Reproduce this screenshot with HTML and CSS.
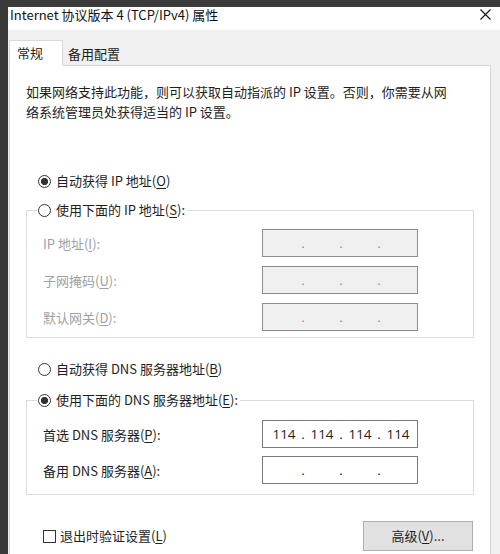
FILE: index.html
```html
<!DOCTYPE html>
<html lang="zh-CN">
<head>
<meta charset="utf-8">
<title>Internet 协议版本 4 (TCP/IPv4) 属性</title>
<link rel="stylesheet" href="styles.css">
</head>
<body>
<div class="screen">
  <div class="window">
    <div class="titlebar">
      <span class="title">Internet 协议版本 4 (TCP/IPv4) 属性</span>
      <svg class="close" width="11" height="11" viewBox="0 0 11 11"><path d="M0.5 0.5 L10.5 10.5 M10.5 0.5 L0.5 10.5" stroke="#111" stroke-width="1.1" fill="none"/></svg>
    </div>
    <div class="body">
      <div class="tabs">
        <div class="tab active">常规</div>
        <div class="tab">备用配置</div>
      </div>
      <div class="panel">
        <p class="desc">如果网络支持此功能，则可以获取自动指派的 IP 设置。否则，你需要从网络系统管理员处获得适当的 IP 设置。</p>

        <div class="option first"><span class="radio on"></span><span>自动获得 IP 地址(<u>O</u>)</span></div>

        <fieldset class="group g-ip">
          <legend class="option"><span class="radio"></span><span>使用下面的 IP 地址(<u>S</u>):</span></legend>
          <div class="row disabled"><span class="lbl">IP 地址(<u>I</u>):</span><span class="ipbox off"><i></i><b>.</b><i></i><b>.</b><i></i><b>.</b><i></i></span></div>
          <div class="row disabled"><span class="lbl">子网掩码(<u>U</u>):</span><span class="ipbox off"><i></i><b>.</b><i></i><b>.</b><i></i><b>.</b><i></i></span></div>
          <div class="row disabled"><span class="lbl">默认网关(<u>D</u>):</span><span class="ipbox off"><i></i><b>.</b><i></i><b>.</b><i></i><b>.</b><i></i></span></div>
        </fieldset>

        <div class="option dns-auto"><span class="radio"></span><span>自动获得 DNS 服务器地址(<u>B</u>)</span></div>

        <fieldset class="group g-dns">
          <legend class="option"><span class="radio on"></span><span>使用下面的 DNS 服务器地址(<u>E</u>):</span></legend>
          <div class="row"><span class="lbl">首选 DNS 服务器(<u>P</u>):</span><span class="ipbox"><i>114</i><b>.</b><i>114</i><b>.</b><i>114</i><b>.</b><i>114</i></span></div>
          <div class="row"><span class="lbl">备用 DNS 服务器(<u>A</u>):</span><span class="ipbox"><i></i><b>.</b><i></i><b>.</b><i></i><b>.</b><i></i></span></div>
        </fieldset>

        <div class="footer">
          <div class="check"><span class="box"></span><span>退出时验证设置(<u>L</u>)</span></div>
          <div class="btn">高级(<u>V</u>)...</div>
        </div>
      </div>
    </div>
  </div>
</div>
</body>
</html>
```

FILE: styles.css
```css
* { box-sizing: border-box; }
html, body { margin: 0; padding: 0; }
body {
  width: 500px;
  height: 554px;
  overflow: hidden;
  font-family: "Noto Sans CJK SC", "Noto Sans", sans-serif;
  font-size: 13px;
  color: #1e1e1e;
  background: #3a3a3a;
}
u { text-decoration: underline; text-underline-offset: 2px; text-decoration-thickness: 1px; }

.screen {
  width: 500px;
  height: 554px;
  padding: 7px 0 0 8px;
  display: flex;
}
.window {
  flex: 1;
  display: flex;
  flex-direction: column;
  background: #f0f0f0;
}
.titlebar {
  height: 23px;
  background: #ffffff;
  display: flex;
  align-items: flex-start;
  justify-content: space-between;
  padding: 0 9px 0 2px;
}
.title { line-height: 16px; color: #111; }
.close { margin-top: 2px; }

.body {
  flex: 1;
  display: flex;
  flex-direction: column;
  padding-left: 1px;
}
.tabs {
  height: 36px;
  padding-top: 10px;
  display: flex;
  align-items: flex-end;
  margin-bottom: -1px;
  position: relative;
  z-index: 1;
}
.tab {
  height: 23px;
  line-height: 22px;
  padding-left: 5px;
  width: 65px;
  color: #1e1e1e;
}
.tab.active {
  height: 26px;
  width: 54px;
  padding-left: 7px;
  line-height: 24px;
  background: #ffffff;
  border: 1px solid #d9d9d9;
  border-bottom: none;
}

.panel {
  width: 482px;
  flex: 1;
  background: #ffffff;
  border: 1px solid #d9d9d9;
  border-bottom: none;
  padding: 16px 16px 0 16px;
  display: flex;
  flex-direction: column;
}
.desc {
  margin: 0;
  line-height: 20px;
  width: 430px;
}

.option {
  display: flex;
  align-items: center;
  gap: 5px;
  line-height: 20px;
  height: 20px;
}
.option.first { margin: 49px 0 0 12px; }
.option.dns-auto { margin: 21px 0 0 12px; }

.radio {
  width: 13px;
  height: 13px;
  border-radius: 50%;
  border: 1px solid #333;
  background: #fff;
  flex: none;
}
.radio.on { background: radial-gradient(circle, #333 0 3.3px, #fff 3.9px); }

.group {
  margin: 9px 0 0 0;
  border: 1px solid #dcdcdc;
  padding: 9px 0 6px 10px;
  min-width: 0;
  display: flex;
  flex-direction: column;
  gap: 9px;
}
.group legend {
  padding: 0 2px 0 1px;
  margin: 0;
}
.group.g-dns {
  margin-top: 11px;
  padding-top: 10px;
  padding-bottom: 10px;
  gap: 8px;
}

.row {
  display: flex;
  align-items: center;
  height: 28px;
}
.lbl {
  width: 225px;
  padding-left: 6px;
  flex: none;
}
.row.disabled .lbl { color: #a0a0a0; }

.ipbox {
  width: 156px;
  height: 28px;
  border: 1px solid #7a7a7a;
  background: #ffffff;
  display: flex;
  align-items: center;
  padding-left: 4px;
  font-family: "Open Sans", "Noto Sans", sans-serif;
  font-size: 13.5px;
  color: #1e1e1e;
}
.ipbox.off {
  background: #f0f0f0;
  border-color: #8c8c8c;
  color: #8c8c8c;
}
.ipbox i {
  font-style: normal;
  width: 34px;
  text-align: center;
}
.ipbox b {
  font-weight: normal;
  width: 4px;
  text-align: center;
}

.footer {
  margin-top: 26px;
  height: 30px;
  display: flex;
  align-items: center;
  justify-content: space-between;
  padding-left: 17px;
  padding-right: 1px;
}
.check {
  display: flex;
  align-items: center;
  gap: 4px;
  line-height: 20px;
}
.box {
  width: 13px;
  height: 13px;
  border: 1px solid #333;
  background: #fff;
}
.btn {
  width: 110px;
  height: 30px;
  background: #e1e1e1;
  border: 1px solid #adadad;
  display: flex;
  align-items: center;
  justify-content: center;
  line-height: 20px;
}
```
